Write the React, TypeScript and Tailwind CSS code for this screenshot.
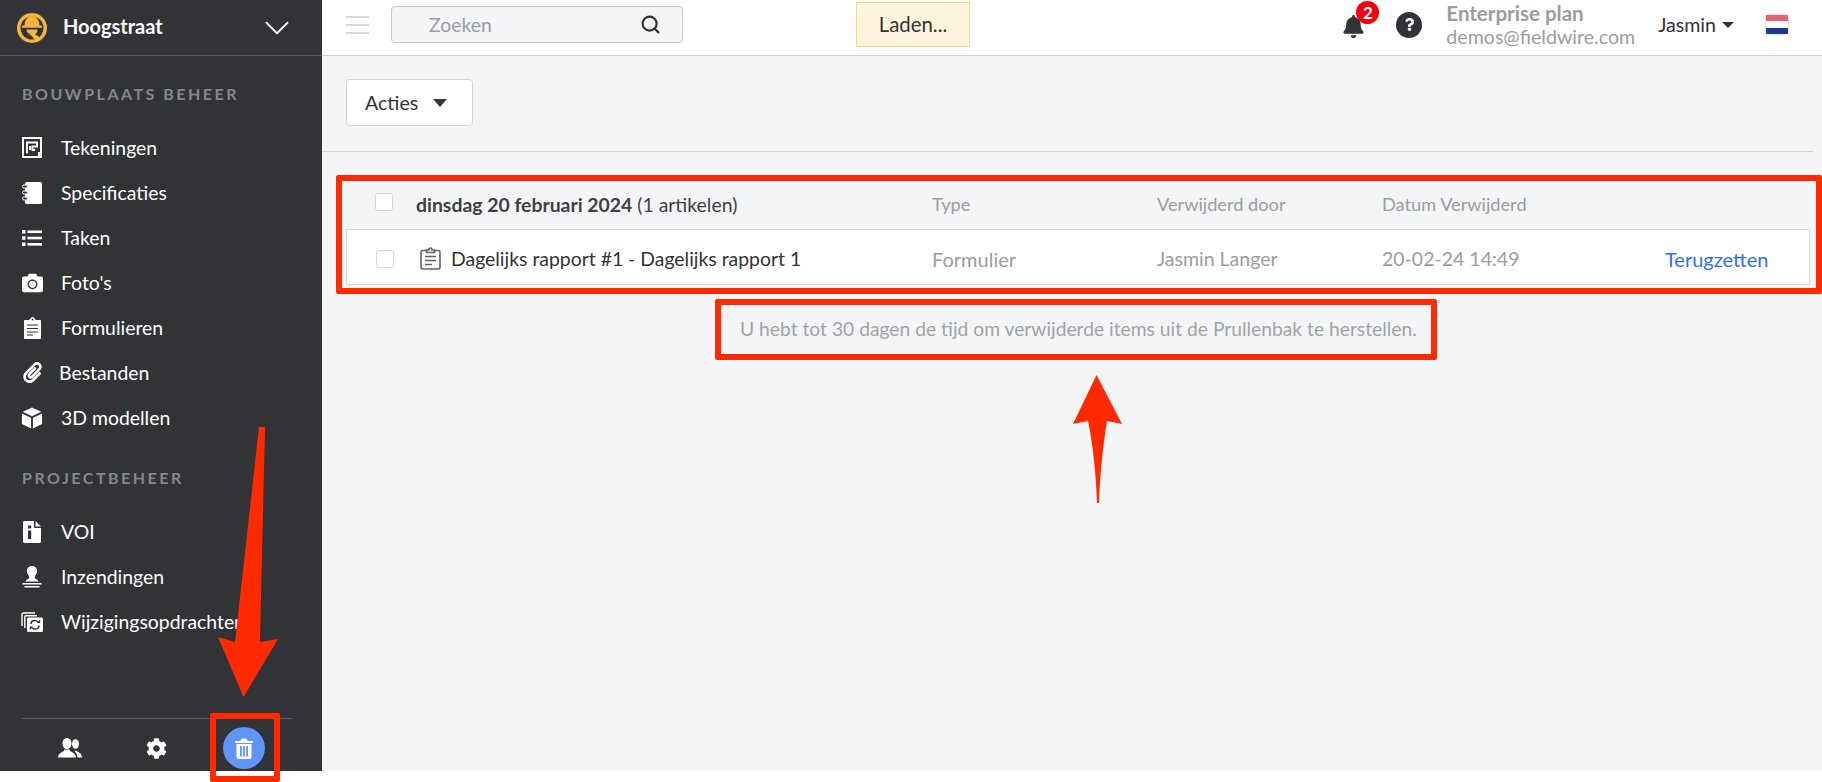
import { Search, ChevronDown } from 'lucide-react';
import { FaBell, FaCamera, FaCog, FaPaperclip, FaQuestion } from 'react-icons/fa';

const Logo = () => (
  <svg viewBox="0 0 30 30" className="h-[30px] w-[30px]">
    <circle cx="15" cy="15" r="15" fill="#f6b53c" />
    <circle cx="15" cy="15" r="11.500" fill="#323336" />
    <path d="M7.500 12.500C7.500 7 11 3 15 3s7.500 4 7.500 9.500H25v2.300H5v-2.300z" fill="#f6b53c" />
    <path d="M9.500 16.500h11c0 2.500-1 4-2.500 4.800l6 3.700-4 4-6-5.800c-2.500-1.500-4.500-3.700-4.500-6.700z" fill="#f6b53c" />
    <path d="M11 19.500l5 5.500" stroke="#323336" strokeWidth="1" />
  </svg>
);

const PlanIcon = () => (
  <svg viewBox="0 0 20 21" className="h-[21px] w-5">
    <path fill="#fff" fillRule="evenodd" d="M0 0h20v21H0zM2 2v17h14v-4h2V2z" />
    <path fill="none" stroke="#fff" strokeWidth="2" d="M5 16.500V5.500h10v4h-4.500v3.500h2.500M8 13V9" />
  </svg>
);

const NotebookIcon = () => (
  <svg viewBox="0 0 20 22" className="h-[22px] w-5">
    <rect x="3" y="0" width="17" height="22" rx="1.500" fill="#fff" />
    <g fill="#323336" stroke="#fff" strokeWidth="1">
      <rect x="0.500" y="3" width="5" height="3" rx="1.500" />
      <rect x="0.500" y="9" width="5" height="3" rx="1.500" />
      <rect x="0.500" y="15" width="5" height="3" rx="1.500" />
    </g>
  </svg>
);

const ListIcon = () => (
  <svg viewBox="0 0 20 16" className="h-4 w-5" fill="#fff">
    <rect x="0" y="0" width="3.500" height="3.500" />
    <rect x="0" y="6.200" width="3.500" height="3.500" />
    <rect x="0" y="12.500" width="3.500" height="3.500" />
    <rect x="5.500" y="0.500" width="14.500" height="2.600" />
    <rect x="5.500" y="6.700" width="14.500" height="2.600" />
    <rect x="5.500" y="13" width="14.500" height="2.600" />
  </svg>
);

const ClipboardIcon = () => (
  <svg viewBox="0 0 17 22" className="h-[22px] w-[17px]">
    <path
      fill="#fff"
      d="M1 3h4l1.500-1.500C7 .5 7.800 0 8.500 0s1.500.5 2 1.500L12 3h4c.6 0 1 .4 1 1v17c0 .6-.4 1-1 1H1c-.6 0-1-.4-1-1V4c0-.6.4-1 1-1z"
    />
    <path d="M3 8h11M3 11.500h11M3 15h11M3 18h6" stroke="#323336" strokeWidth="1.200" />
    <circle cx="8.500" cy="2.500" r="0.900" fill="#323336" />
  </svg>
);

const CubeIcon = () => (
  <svg viewBox="0 0 24 24" className="h-[24px] w-[24px]" fill="#fff">
    <path d="M12 0.500L22 5.200L12 10L2 5.200z" />
    <path d="M1 7L11 11.800V23.500L1 18.500z" />
    <path d="M23 7L13 11.800V23.500L23 18.500z" />
  </svg>
);

const InfoFileIcon = () => (
  <svg viewBox="0 0 18 22" className="h-[22px] w-[18px]">
    <path
      fill="#fff"
      d="M1.500 0H11v6c0 .6.400 1 1 1h6v13.500c0 .8-.7 1.500-1.500 1.500h-15C.7 22 0 21.300 0 20.500v-19C0 .7.700 0 1.500 0zM12.500 0L18 5.500h-5.500z"
    />
    <rect x="5" y="4.500" width="3.200" height="3" fill="#323336" />
    <rect x="5" y="9.500" width="3.200" height="8.500" fill="#323336" />
  </svg>
);

const StampIcon = () => (
  <svg viewBox="0 0 20 22" className="h-[22px] w-5" fill="#fff">
    <path d="M10 0c3 0 5.200 2.200 5.200 5 0 2.200-1.500 3.500-2.200 5-.3.800-.3 1.500 0 2.200.5 1 3 1 3.500 3.300H3.500c.5-2.300 3-2.300 3.500-3.300.3-.7.300-1.400 0-2.200-.7-1.500-2.200-2.800-2.200-5C4.800 2.200 7 0 10 0z" />
    <rect x="0.500" y="17" width="19" height="1.500" />
    <rect x="2.500" y="20" width="15" height="1.500" />
  </svg>
);

const OrdersIcon = () => (
  <svg viewBox="0 0 22 20" className="h-5 w-[22px]">
    <path fill="none" stroke="#fff" strokeWidth="1.400" d="M1 14V2.500C1 1.500 1.500 1 2.500 1H14" />
    <path fill="none" stroke="#fff" strokeWidth="1.400" d="M3.800 16V5c0-.8.400-1.200 1.200-1.200h11" />
    <rect x="6" y="5.500" width="16" height="14.500" rx="1.500" fill="#fff" />
    <path
      fill="none"
      stroke="#323336"
      strokeWidth="1.500"
      d="M10 12c0-2.200 1.700-3.600 4-3.600 1.200 0 2.200.5 3 1.400M18 13.500c0 2.200-1.700 3.600-4 3.600-1.200 0-2.200-.5-3-1.400"
    />
    <path fill="#323336" d="M15.800 11h3.400V7.600zM12.200 14.500H8.800v3.400z" />
  </svg>
);

const PeopleIcon = () => (
  <svg viewBox="0 0 24 20" className="h-5 w-6" fill="#fff">
    <ellipse cx="17.500" cy="6" rx="3.500" ry="4.800" />
    <path d="M19.500 19.500H24c0-3.500-2.500-5-5-6.300l-1-.7-1.500 1c1.800 1.300 3 3.300 3 6z" />
    <ellipse cx="9" cy="5.500" rx="4.500" ry="5.500" />
    <path d="M0 19.500c0-3.800 3.500-5 6-6.500l.5-1.500h5l.5 1.500c2.500 1.500 6 2.700 6 6.500z" />
  </svg>
);

const TrashIcon = () => (
  <svg viewBox="0 0 18 21" className="h-[21px] w-[18px]" fill="#fff">
    <path d="M0 3h5.500L6.500.5h5L12.500 3H18v2H0z" />
    <path
      fillRule="evenodd"
      d="M1.500 6h15v13c0 1.100-.9 2-2 2h-11c-1.100 0-2-.9-2-2zM5 8v10.500h1.800V8zM8.100 8v10.500h1.800V8zM11.200 8v10.500H13V8z"
    />
  </svg>
);

const FormIcon = () => (
  <svg viewBox="0 0 21 23" className="h-[23px] w-[21px]" fill="none" stroke="#5f6269" strokeWidth="1.600">
    <path d="M6 3.500H2.500c-.8 0-1.500.7-1.500 1.500v15.500c0 .8.700 1.500 1.500 1.500h16c.8 0 1.500-.7 1.500-1.500V5c0-.8-.7-1.500-1.500-1.500H15" />
    <path d="M6.500 5.500V3h2.500c0-1.200.6-2 1.500-2s1.500.8 1.500 2h2.500v2.500z" />
    <path d="M5 9.500h11M5 13.500h11M5 17.500h7" />
  </svg>
);

const siteItems = [
  { label: 'Tekeningen', icon: <PlanIcon /> },
  { label: 'Specificaties', icon: <NotebookIcon /> },
  { label: 'Taken', icon: <ListIcon /> },
  { label: "Foto's", icon: <FaCamera className="h-[22px] w-[21px] text-white" /> },
  { label: 'Formulieren', icon: <ClipboardIcon /> },
  { label: 'Bestanden', icon: <FaPaperclip className="h-[21px] w-[21px] text-white" />, tight: true },
  { label: '3D modellen', icon: <CubeIcon /> },
];

const projectItems = [
  { label: 'VOI', icon: <InfoFileIcon /> },
  { label: 'Inzendingen', icon: <StampIcon /> },
  { label: 'Wijzigingsopdrachten', icon: <OrdersIcon /> },
];

type NavEntry = { label: string; icon: React.ReactNode; tight?: boolean };

const NavItem = ({ item }: { item: NavEntry }) => (
  <div className="flex h-[45px] items-center pl-[21px] text-[19.4px] text-white">
    <span className={`flex w-[22px] justify-center ${item.tight ? 'mr-[16px]' : 'mr-[18px]'}`}>{item.icon}</span>
    <span className="whitespace-nowrap">{item.label}</span>
  </div>
);

const SectionTitle = ({ children }: { children: React.ReactNode }) => (
  <div className="px-[22px] text-[16px] leading-[20px] font-bold tracking-[2.5px] text-[#85878c]">{children}</div>
);

const Checkbox = () => <span className="block h-[18px] w-[18px] rounded-[3px] border border-[#d5d7da] bg-white" />;

// red markup drawn over the screenshot
const Annotations = () => (
  <>
    <div className="pointer-events-none absolute top-[175px] left-[336px] h-[119px] w-[1486px] rounded-[2px] border-[6px] border-[#ff2a00]" />
    <div className="pointer-events-none absolute top-[299px] left-[715px] h-[61px] w-[722px] rounded-[2px] border-[6px] border-[#ff2a00]" />
    <div className="pointer-events-none absolute top-[713px] left-[210px] h-[69px] w-[70px] rounded-[2px] border-[6px] border-[#ff2a00]" />
    <svg className="pointer-events-none absolute top-0 left-0 h-[782px] w-[1822px]" viewBox="0 0 1822 782">
      <path
        fill="#ff2a00"
        d="M1096.500 375L1122 424L1107 421C1103 445 1100 475 1099 503H1097C1096 475 1093 445 1088 421L1073 424z"
      />
      <path fill="#ff2a00" d="M259 427H265L260 642L278 639L243.500 697L218 637L235 642z" />
    </svg>
  </>
);

export default function App() {
  return (
    <div className="relative h-[782px] w-[1822px] overflow-hidden bg-white font-[Lato,sans-serif]">
      <div className="flex h-[771px]">
        <aside className="flex w-[322px] shrink-0 flex-col bg-[#323336]">
          <div className="flex h-[56px] items-center border-b border-[#5a5b5e] pr-[24px] pl-[17px]">
            <Logo />
            <span className="ml-[16px] flex-1 pb-[4px] text-[20px] font-bold text-white">Hoogstraat</span>
            <ChevronDown className="h-[42px] w-[42px] text-white" strokeWidth={1.1} />
          </div>
          <div className="mt-[28px]">
            <SectionTitle>BOUWPLAATS BEHEER</SectionTitle>
            <div className="mt-[21px]">
              {siteItems.map((item) => (
                <NavItem key={item.label} item={item} />
              ))}
            </div>
          </div>
          <div className="mt-[28px]">
            <SectionTitle>PROJECTBEHEER</SectionTitle>
            <div className="mt-[21px]">
              {projectItems.map((item) => (
                <NavItem key={item.label} item={item} />
              ))}
            </div>
          </div>
          <div className="mx-[22px] mt-auto flex h-[53px] w-[270px] items-center border-t border-[#5a5b5e] pt-[6px] pl-[36px]">
            <PeopleIcon />
            <FaCog className="ml-[64px] h-[21px] w-[21px] text-white" />
            <span className="ml-[56px] flex h-[42px] w-[42px] items-center justify-center rounded-full bg-[#5f95fb]">
              <TrashIcon />
            </span>
          </div>
        </aside>

        <main className="flex min-w-0 flex-1 flex-col bg-[#f4f5f7]">
          <header className="flex h-[56px] items-center border-b border-[#cfd0d2] bg-white pr-[34px] pb-[6px] pl-[24px]">
            <div className="flex w-[23px] flex-col gap-[6px]">
              <span className="h-[2px] bg-[#d4d5d7]" />
              <span className="h-[2px] bg-[#d4d5d7]" />
              <span className="h-[2px] bg-[#d4d5d7]" />
            </div>
            <div className="ml-[22px] flex h-[37px] w-[292px] items-center justify-between rounded-[4px] border border-[#c9cbce] bg-[#f4f5f7] pr-[21px] pl-[37px]">
              <span className="text-[19.4px] text-[#9b9da0]">Zoeken</span>
              <Search className="h-[21px] w-[21px] text-[#323336]" strokeWidth={2.5} />
            </div>
            <div className="ml-[173px] flex h-[45px] w-[114px] items-center justify-center border border-[#f5d98f] bg-[#fcf5dc] text-[20.4px] text-[#323336]">
              Laden...
            </div>
            <div className="relative ml-auto h-[23px] w-[21px]">
              <FaBell className="mt-[2px] h-[23px] w-[21px] text-[#323336]" />
              <span className="absolute top-[-12px] left-[13px] flex h-[23px] w-[23px] items-center justify-center rounded-full bg-[#f5000f] text-[17px] font-bold text-white">
                2
              </span>
            </div>
            <span className="ml-[32px] flex h-[26px] w-[26px] items-center justify-center rounded-full bg-[#323336]">
              <FaQuestion className="h-[13px] w-[13px] text-white" />
            </span>
            <div className="ml-[24px] flex flex-col text-[19.6px] leading-[23px] text-[#9b9da0]">
              <span className="text-[20.5px] font-bold">Enterprise plan</span>
              <span>demos@fieldwire.com</span>
            </div>
            <span className="ml-[23px] text-[19.6px] text-[#323336]">Jasmin</span>
            <span className="ml-[6px] h-0 w-0 border-x-[6px] border-t-[6px] border-x-transparent border-t-[#323336]" />
            <div className="ml-[32px] h-[19px] w-[22px] overflow-hidden rounded-[1px] shadow-[0_0_2px_#9ca3af]">
              <div className="h-1/3 bg-[#e8626b]" />
              <div className="h-1/3 bg-white" />
              <div className="h-1/3 bg-[#1d3a8f]" />
            </div>
          </header>

          <div className="mt-[23px] pl-[24px]">
            <button className="flex h-[47px] w-[127px] items-center rounded-[4px] border border-[#d4d6d9] bg-white pl-[18px] text-[19.6px] text-[#323336]">
              Acties
              <span className="ml-[15px] h-0 w-0 border-x-[7px] border-t-[8px] border-x-transparent border-t-[#323336]" />
            </button>
          </div>
          <div className="mt-[25px] mr-[9px] border-b border-[#d4d6d9]" />

          <section className="mt-[29px] mr-[12px] ml-[24px]">
            <div className="grid h-[48px] grid-cols-[70px_516px_225px_225px_1fr] items-center text-[18.2px] text-[#9b9da0]">
              <span className="pb-[6px] pl-[29px]">
                <Checkbox />
              </span>
              <span className="text-[19.4px] text-[#3f4043]">
                <b className="font-bold">dinsdag 20 februari 2024</b> (1 artikelen)
              </span>
              <span>Type</span>
              <span>Verwijderd door</span>
              <span>Datum Verwijderd</span>
            </div>
            <div className="grid h-[56px] grid-cols-[69px_516px_225px_225px_283px_1fr] items-center border border-[#d7d9dc] bg-white pt-[3px] text-[19.5px] text-[#9b9da0]">
              <span className="pl-[29px]">
                <Checkbox />
              </span>
              <span className="flex items-center pl-[4px] text-[19.4px] text-[#323336]">
                <FormIcon />
                <span className="ml-[10px]">Dagelijks rapport #1 - Dagelijks rapport 1</span>
              </span>
              <span className="text-[20px]">Formulier</span>
              <span>Jasmin Langer</span>
              <span>20-02-24 14:49</span>
              <span className="text-[20px] text-[#2f6fed]">Terugzetten</span>
            </div>
          </section>

          <p className="mt-[32px] pl-[418px] text-[19.25px] leading-[24px] whitespace-nowrap text-[#a1a3a6]">
            U hebt tot 30 dagen de tijd om verwijderde items uit de Prullenbak te herstellen.
          </p>
        </main>
      </div>
      <Annotations />
    </div>
  );
}
